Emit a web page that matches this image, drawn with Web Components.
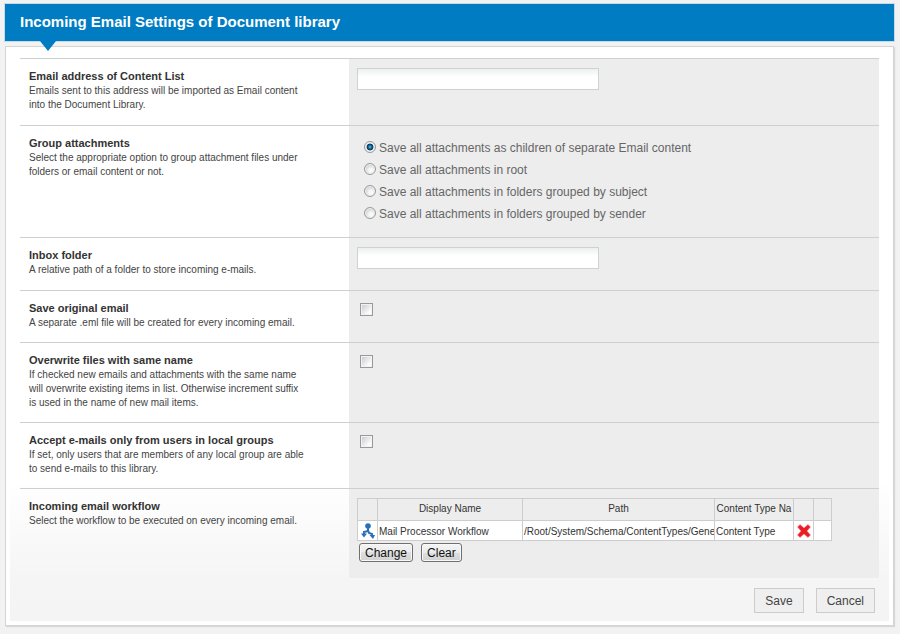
<!DOCTYPE html>
<html lang="en">
<head>
<meta charset="utf-8">
<title>Incoming Email Settings of Document library</title>
<style>
body { margin: 0; padding: 4px 6px 8px 5px; background: #f2f2f2; font: 12px "Liberation Sans", Arial, sans-serif; color: #333; }
</style>
</head>
<body>
<page-title>Incoming Email Settings of Document library</page-title>
<settings-panel>
  <settings-form></settings-form>
</settings-panel>

<template id="page-title">
<style>
:host { display: block; position: relative; background: #007cc2; box-shadow: 0 0 0 1px #c5dbe8; }
h1 { margin: 0; padding: 8px 15px 9px; font-size: 15px; line-height: 20px; font-weight: bold; color: #fff; }
.pointer { position: absolute; left: 35px; top: 100%; width: 16px; height: 10px; background: #007cc2; clip-path: polygon(0 0, 100% 0, 50% 100%); z-index: 1; }
</style>
<h1><slot></slot></h1>
<div class="pointer"></div>
</template>

<template id="settings-panel">
<style>
:host { display: block; margin-top: 5px; border: 1px solid #d4d4d4; background: #fff; padding: 4px; box-shadow: 1px 1px 1px #d8d8d8; }
.sheet { padding: 7px 10px 8px; background: linear-gradient(to top, #f4f4f4 0, #f5f5f5 40px, #fff 140px); }
</style>
<div class="sheet"><slot></slot></div>
</template>

<template id="setting-row">
<style>
:host { display: grid; grid-template-columns: 329px 1fr; border-top: 1px solid #cfcfcf; }
.text { padding: 10px 9px var(--row-end, 13px); line-height: 14px; }
.name { display: block; font-size: 11px; font-weight: bold; color: #333; }
.note { max-width: 275px; margin: 1px 0 0; font-size: 10px; color: #444; }
.value { padding: 9px 8px; background: #ededed; color: #555; min-width: 0; }
</style>
<div class="text"><span class="name"><slot name="name"></slot></span><p class="note"><slot name="note"></slot></p></div>
<div class="value"><slot></slot></div>
</template>

<template id="radio-list">
<style>
:host { display: block; padding: 2px 0 3px 7px; }
label { display: flex; align-items: center; gap: 3px; line-height: 22px; font-size: 12px; color: #666; }
input { appearance: none; flex: none; width: 12px; height: 12px; margin: 0 0 2px; border: 1px solid #9a9a9a; border-radius: 50%; background: radial-gradient(circle at 60% 65%, #f8f8f8 20%, #c9cccf 75%); box-shadow: inset 0 0 0 1px #f2f2f2; }
input:checked { background: radial-gradient(circle at 50% 50%, #5fc0ea 0, #1b7fb5 18%, #0b3350 42%, #e8eaec 54%); }
</style>
</template>

<template id="workflow-grid">
<style>
:host { display: block; }
table { width: 474px; max-width: 100%; table-layout: fixed; border-collapse: collapse; font-size: 10px; color: #333; }
th, td { box-sizing: border-box; padding: 0 1px; border: 1px solid #cdcdcd; overflow: hidden; white-space: nowrap; font-weight: normal; text-align: left; }
th { height: 22px; padding-bottom: 2px; text-align: center; }
td { height: 20px; padding-top: 2px; background: #fff; }
td.icon, td.remove { padding: 0; text-align: center; }
svg { display: block; margin: 0 auto; }
button { display: block; margin: 0 auto; padding: 0; border: 0; background: none; }
</style>
<table>
<colgroup><col style="width:20px"><col style="width:145px"><col style="width:192px"><col style="width:79px"><col style="width:20px"><col style="width:18px"></colgroup>
<thead><tr><th></th><th>Display Name</th><th>Path</th><th>Content Type Na</th><th></th><th></th></tr></thead>
<tbody><tr>
<td class="icon"><svg width="14" height="16" viewBox="0 0 14 16" aria-hidden="true"><g fill="none" stroke="#2c6fb7" stroke-width="2"><path d="M7 3v5L3 9v3M7 7l1 3 3 1v2"/></g><g fill="#2c6fb7"><circle cx="7" cy="3" r="2.8"/><path d="M0 10.500h6l-3 4z"/><path d="M8.500 12h5.500l-2 4z"/></g></svg></td>
<td>Mail Processor Workflow</td><td>/Root/System/Schema/ContentTypes/Gene</td><td>Content Type</td>
<td class="remove"><button type="button" aria-label="Remove"><svg width="14" height="14" viewBox="0 0 14 14"><path d="M3 .5l4 3.500L11 .5l2.500 2.500L10 7l3.500 4-2.500 2.500L7 10l-4 3.500L.5 11 4 7 .5 3z" fill="#ec1c24" stroke="#f58a8a" stroke-width=".6"/></svg></button></td><td></td>
</tr></tbody>
</table>
</template>

<template id="settings-form">
<style>
form { display: block; }
setting-row:nth-of-type(n+4) { --row-end: 12px; }
input[type=text] { display: block; box-sizing: border-box; width: 242px; max-width: 100%; height: 22px; margin: 0; padding: 0 4px; border: 1px solid #cfd2d2; border-radius: 0; background: linear-gradient(#edf0f0, #fff 8px); font: 12px "Liberation Sans", Arial, sans-serif; outline: 0; }
input[type=checkbox] { display: block; appearance: none; box-sizing: border-box; width: 13px; height: 13px; margin: 3px; border: 1px solid #999; background: linear-gradient(135deg, #c3c7cd, #fff 80%); background-clip: content-box; padding: 1px; box-shadow: inset 0 0 0 1px #f2f2f2; }
.tools { display: flex; gap: 8px; padding: 2px 2px 7px; }
.tools button { box-sizing: border-box; height: 19px; padding: 0 5px; border: 1px solid #707070; border-radius: 3px; background: linear-gradient(#f4f4f4, #ebebeb 50%, #dfdfdf 50%, #d2d2d2); box-shadow: inset 0 0 0 1px #f8f8f8; color: #111; font: 12px/16px "Liberation Sans", Arial, sans-serif; }
.actions { display: flex; justify-content: flex-end; gap: 12px; padding: 10px 4px 0; }
.actions button { box-sizing: border-box; height: 25px; padding: 0 10px; border: 1px solid #ccc; background: #efefef; color: #444; font: 12px "Liberation Sans", Arial, sans-serif; }
</style>
<form>
<setting-row><label slot="name" for="address">Email address of Content List</label><span slot="note">Emails sent to this address will be imported as Email content into the Document Library.</span><input type="text" id="address"></setting-row>
<setting-row><span slot="name">Group attachments</span><span slot="note">Select the appropriate option to group attachment files under folders or email content or not.</span><radio-list label="Group attachments" options="Save all attachments as children of separate Email content|Save all attachments in root|Save all attachments in folders grouped by subject|Save all attachments in folders grouped by sender"></radio-list></setting-row>
<setting-row><label slot="name" for="inbox">Inbox folder</label><span slot="note">A relative path of a folder to store incoming e-mails.</span><input type="text" id="inbox"></setting-row>
<setting-row><label slot="name" for="original">Save original email</label><span slot="note">A separate .eml file will be created for every incoming email.</span><input type="checkbox" id="original"></setting-row>
<setting-row><label slot="name" for="overwrite">Overwrite files with same name</label><span slot="note">If checked new emails and attachments with the same name will overwrite existing items in list. Otherwise increment suffix is used in the name of new mail items.</span><input type="checkbox" id="overwrite"></setting-row>
<setting-row><label slot="name" for="local">Accept e-mails only from users in local groups</label><span slot="note">If set, only users that are members of any local group are able to send e-mails to this library.</span><input type="checkbox" id="local"></setting-row>
<setting-row><span slot="name">Incoming email workflow</span><span slot="note">Select the workflow to be executed on every incoming email.</span><workflow-grid></workflow-grid><div class="tools"><button type="button">Change</button><button type="button">Clear</button></div></setting-row>
<div class="actions"><button type="submit">Save</button><button type="button">Cancel</button></div>
</form>
</template>

<script>
class TemplateElement extends HTMLElement {
  constructor() {
    super();
    this.attachShadow({ mode: "open" });
    this.shadowRoot.append(document.getElementById(this.localName).content.cloneNode(true));
  }
}

class RadioList extends TemplateElement {
  connectedCallback() {
    this.setAttribute("role", "radiogroup");
    this.setAttribute("aria-label", this.getAttribute("label"));
    this.getAttribute("options").split("|").forEach((text, i) => {
      const label = document.createElement("label");
      const input = document.createElement("input");
      input.type = "radio";
      input.name = "choice";
      input.checked = i === 0;
      label.append(input, text);
      this.shadowRoot.append(label);
    });
  }
}

customElements.define("page-title", class extends TemplateElement {});
customElements.define("settings-panel", class extends TemplateElement {});
customElements.define("setting-row", class extends TemplateElement {});
customElements.define("radio-list", RadioList);
customElements.define("workflow-grid", class extends TemplateElement {});
customElements.define("settings-form", class extends TemplateElement {});
</script>
</body>
</html>
